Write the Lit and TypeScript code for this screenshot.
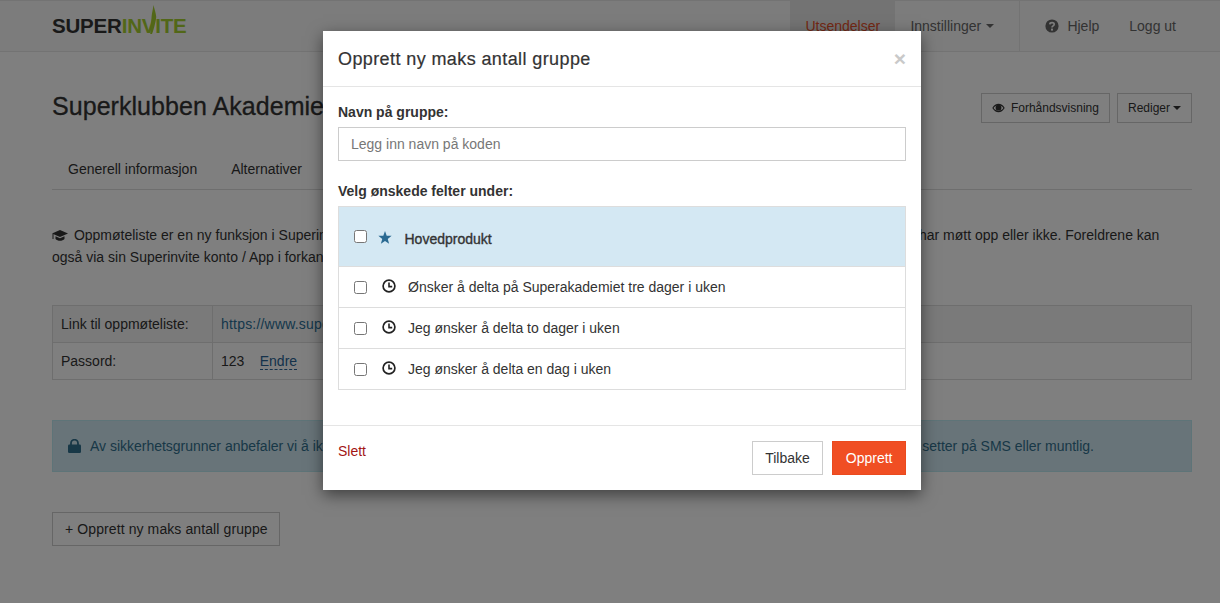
import { LitElement, html, css } from 'lit';
import { customElement } from 'lit/decorators.js';

const clock = html`<svg class="clock" viewBox="0 0 14 14" width="14" height="14"><circle cx="7" cy="7" r="5.9" fill="none" stroke="#222" stroke-width="1.7"/><path d="M7 3.4V7.6H10.2" fill="none" stroke="#222" stroke-width="1.6"/></svg>`;

@customElement('app-root')
export class AppRoot extends LitElement {
  static styles = css`
    :host {
      display: block;
      position: relative;
      height: 603px;
      overflow: hidden;
      background: #fff;
      color: #333;
      font: 14px/20px "Liberation Sans", Arial, sans-serif;
    }
    a { color: #2a6f97; text-decoration: none; }

    /* navbar */
    .navbar {
      display: flex;
      height: 50px;
      padding-left: 52px;
      background: #f8f8f8;
      border-top: 1px solid #e7e7e7;
      border-bottom: 1px solid #e7e7e7;
    }
    .logo {
      position: relative;
      font-size: 20.5px;
      font-weight: 700;
      line-height: 50px;
      letter-spacing: -0.2px;
      color: #333;
    }
    .logo span { color: #a4cf30; }
    .logo svg { position: absolute; left: 96px; top: 4px; }
    .nav-right { display: flex; margin-left: auto; color: #666; }
    .nav-item { display: flex; align-items: center; gap: 5px; padding: 0 15px; }
    .nav-item.active { width: 75px; background: #e7e7e7; color: #e8502a; }
    .nav-item.settings { width: 94px; border-right: 1px solid #e7e7e7; }
    .nav-item.settings .caret { margin-left: 0; }
    .nav-item.help { margin-left: 10px; gap: 8px; padding-right: 15px; }
    .nav-item.logout { padding: 0 44px 0 15px; }
    .caret {
      display: inline-block;
      margin-left: 3px;
      border-top: 4px solid currentColor;
      border-left: 4px solid transparent;
      border-right: 4px solid transparent;
    }

    /* page */
    .page { padding: 0 28px 0 52px; }
    .head { display: flex; align-items: center; justify-content: space-between; height: 30px; margin-top: 41px; }
    h1 { margin: -4px 0 0; font-size: 25px; font-weight: 400; letter-spacing: 0.05px; color: #333; -webkit-text-stroke: 0.3px #333; white-space: nowrap; }
    .actions { display: flex; gap: 7px; }
    .btn-xs {
      display: flex;
      align-items: center;
      gap: 6px;
      height: 30px;
      box-sizing: border-box;
      padding: 0 10px;
      border: 1px solid #ccc;
      font-size: 12px;
      color: #333;
    }
    .tabs { display: flex; gap: 34px; height: 40px; margin-top: 26px; padding-left: 16px; line-height: 40px; border-bottom: 1px solid #ddd; }
    .intro { margin: 34px 0 0; line-height: 22px; white-space: nowrap; }
    .intro svg { vertical-align: -2px; margin-right: 2px; }
    .info-table { display: grid; grid-template-columns: 160px 1fr; margin-top: 37px; border: 1px solid #ddd; }
    .info-table > div { height: 36px; line-height: 36px; padding-left: 8px; box-sizing: border-box; }
    .info-table .c1 { border-right: 1px solid #ddd; }
    .info-table .top { background: #f5f5f5; border-bottom: 1px solid #ddd; height: 37px; }
    .url { letter-spacing: 0.2px; }
    .endre { margin-left: 11.5px; color: #2a6496; border-bottom: 1px dashed #2a6496; }
    .alert {
      display: flex;
      align-items: center;
      gap: 9px;
      height: 50px;
      margin-top: 40px;
      padding-left: 15px;
      background: #d1e9f2;
      border: 1px solid #bce8f1;
      color: #31708f;
      letter-spacing: -0.012px;
      white-space: nowrap;
    }
    .add-btn {
      display: inline-block;
      margin-top: 40px;
      padding: 6px 11px 6px 12px;
      border: 1px solid #ccc;
      color: #333;
      letter-spacing: 0.1px;
    }

    /* modal */
    .backdrop {
      position: absolute;
      inset: 0;
      display: flex;
      justify-content: center;
      align-items: flex-start;
      padding: 31px 0 0 24px;
      background: rgba(0, 0, 0, 0.5);
    }
    .modal { width: 598px; background: #fff; box-shadow: 0 5px 15px rgba(0, 0, 0, 0.5); }
    .modal-head {
      display: flex;
      align-items: center;
      justify-content: space-between;
      height: 55px;
      padding: 0 15px;
      border-bottom: 1px solid #e5e5e5;
    }
    h2 { margin: 0; font-size: 18px; font-weight: 400; letter-spacing: 0.4px; color: #333; -webkit-text-stroke: 0.2px #333; }
    .close { font-size: 21px; font-weight: 700; color: #c9c9c9; }
    .modal-body { padding: 15px; }
    label { display: block; font-weight: 700; color: #333; }
    .name { margin-top: 5px; margin-bottom: 20px; }
    input.text {
      display: block;
      box-sizing: border-box;
      width: 100%;
      height: 34px;
      padding: 0 12px;
      border: 1px solid #ccc;
      font: inherit;
      color: #333;
      outline: none;
    }
    input.text::placeholder { color: #777; opacity: 1; }
    .list { margin-top: 5px; margin-bottom: 20px; border: 1px solid #ddd; }
    .row { display: flex; align-items: center; height: 40px; padding-left: 15px; border-top: 1px solid #ddd; }
    .row input { margin: 0 14.5px 0 0; width: 13px; height: 13px; }
    .row .clock { margin: -2px 12.5px 0 0; }
    .row.main { height: 59px; padding-top: 4px; box-sizing: border-box; border-top: 0; background: #d4e8f3; -webkit-text-stroke: 0.35px #333; }
    .row.main svg { margin: -3px 12.5px 0 -3.5px; }
    .row.main input { margin-top: -4px; }
    .modal-foot {
      display: flex;
      align-items: flex-start;
      padding: 15px;
      border-top: 1px solid #e5e5e5;
    }
    .delete { margin-right: auto; color: #a31515; }
    .btn { box-sizing: border-box; height: 34px; line-height: 32px; padding: 0 12.5px; border: 1px solid #ccc; color: #333; }
    .btn.primary { margin-left: 9px; background: #f04e23; border-color: #ea4a1e; color: #fff; }
  `;

  render() {
    return html`
      <nav class="navbar">
        <div class="logo">SUPER<span>INVITE</span>
          <svg width="10" height="29" viewBox="0 0 10 29"><path d="M5.5 0C6 3 8 8 8.2 11.5 8.4 14 6 24 4 29L2.2 29C3 22 3.2 17 3.6 11.5 3.9 8 5 4 5.5 0Z" fill="#a4cf30"/></svg>
        </div>
        <div class="nav-right">
          <div class="nav-item active">Utsendelser</div>
          <div class="nav-item settings">Innstillinger <i class="caret"></i></div>
          <div class="nav-item help">
            <svg width="14" height="14" viewBox="0 0 14 14"><circle cx="7" cy="7" r="6.6" fill="#666"/><path d="M4.8 5.3C5 3.2 9.2 3.1 9.2 5.3 9.2 6.9 7 6.8 7 8.5" fill="none" stroke="#f8f8f8" stroke-width="1.7"/><rect x="6" y="9.6" width="2" height="2" fill="#f8f8f8"/></svg>
            Hjelp
          </div>
          <div class="nav-item logout">Logg ut</div>
        </div>
      </nav>

      <main class="page">
        <div class="head">
          <h1>Superklubben Akademiet</h1>
          <div class="actions">
            <div class="btn-xs">
              <svg width="13" height="10" viewBox="0 0 13 10"><path d="M.3 5C3.5-.6 9.5-.6 12.7 5 9.5 10.6 3.5 10.6.3 5Z" fill="#333"/><path d="M1.6 5C4 1.3 9 1.3 11.4 5 9 8.7 4 8.7 1.6 5Z" fill="#fff"/><circle cx="6.5" cy="4.7" r="2.9" fill="#333"/></svg>
              Forhåndsvisning
            </div>
            <div class="btn-xs">Rediger <i class="caret" style="margin-left:-3px"></i></div>
          </div>
        </div>
        <div class="tabs"><span>Generell informasjon</span><span>Alternativer</span></div>
        <p class="intro">
          <svg width="16" height="12" viewBox="0 0 16 12"><path d="M8 0 16 3.5 8 7 0 3.5Z" fill="#333"/><path d="M3.5 6.2 8 8.2 12.5 6.2V9C10.5 11.4 5.5 11.4 3.5 9Z" fill="#333"/><path d="M1 4V9" stroke="#333"/></svg>
          Oppmøteliste er en ny funksjon i Superinvite som gjør det enkelt å holde oversikt over hvem av deltakerne hvert gang dere samles, som har møtt opp eller ikke. Foreldrene kan<br>
          også via sin Superinvite konto / App i forkant melde fra om fravær.
        </p>
        <div class="info-table">
          <div class="c1 top">Link til oppmøteliste:</div>
          <div class="top"><a class="url" href="#">https://www.superinvite.no/oppmoteliste</a></div>
          <div class="c1">Passord:</div>
          <div>123 <a class="endre" href="#">Endre</a></div>
        </div>
        <div class="alert">
          <svg width="13" height="14" viewBox="0 0 13 14"><path d="M3 6V4.2a3.5 3.5 0 0 1 7 0V6" fill="none" stroke="#31708f" stroke-width="1.8"/><rect x="0" y="5.5" width="13" height="8.5" rx="1.2" fill="#31708f"/></svg>
          Av sikkerhetsgrunner anbefaler vi å ikke dele passordet på e-post, men at dere heller gir det videre til den som skal bruke det når dere setter på SMS eller muntlig.
        </div>
        <div class="add-btn">+ Opprett ny maks antall gruppe</div>
      </main>

      <div class="backdrop">
        <section class="modal">
          <header class="modal-head">
            <h2>Opprett ny maks antall gruppe</h2>
            <span class="close">×</span>
          </header>
          <div class="modal-body">
            <label>Navn på gruppe:</label>
            <div class="name"><input class="text" placeholder="Legg inn navn på koden"></div>
            <label>Velg ønskede felter under:</label>
            <div class="list">
              <div class="row main">
                <input type="checkbox">
                <svg width="14" height="13" viewBox="0 0 14 13"><path d="M7 0 8.7 4.65 13.66 4.84 9.76 7.9 11.11 12.66 7 9.9 2.89 12.66 4.24 7.9 .34 4.84 5.3 4.65Z" fill="#2a6a92"/></svg>
                Hovedprodukt
              </div>
              <div class="row"><input type="checkbox">${clock}Ønsker å delta på Superakademiet tre dager i uken</div>
              <div class="row"><input type="checkbox">${clock}Jeg ønsker å delta to dager i uken</div>
              <div class="row"><input type="checkbox">${clock}Jeg ønsker å delta en dag i uken</div>
            </div>
          </div>
          <footer class="modal-foot">
            <a class="delete" href="#">Slett</a>
            <div class="btn">Tilbake</div>
            <div class="btn primary">Opprett</div>
          </footer>
        </section>
      </div>
    `;
  }
}
